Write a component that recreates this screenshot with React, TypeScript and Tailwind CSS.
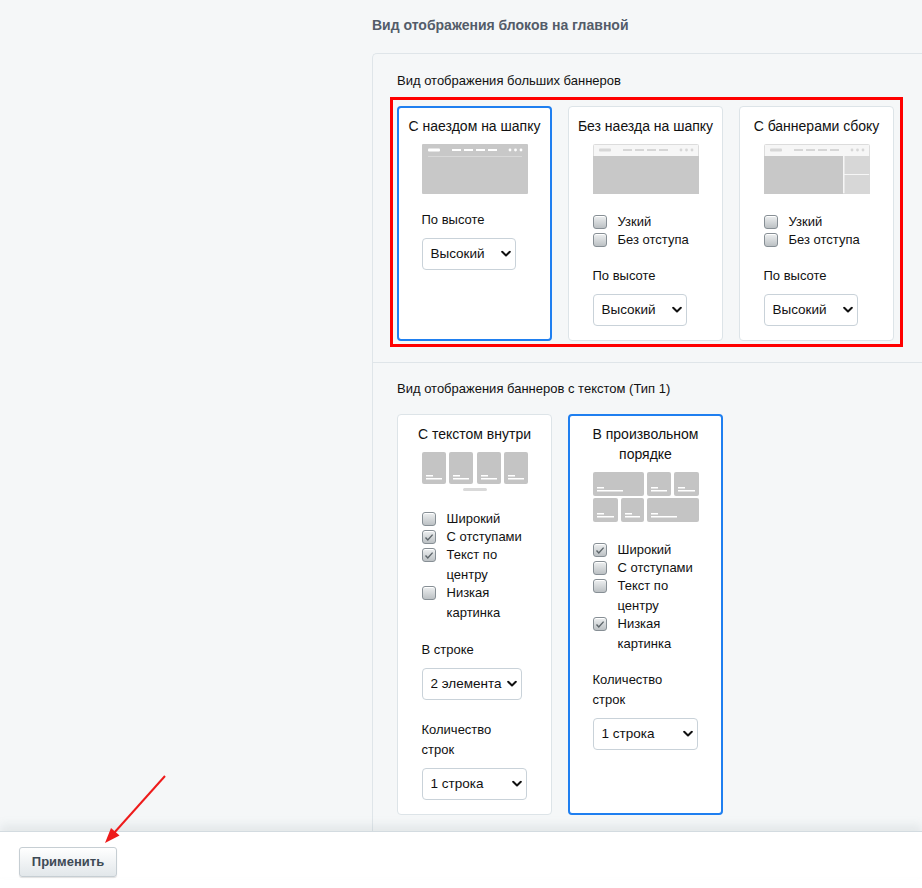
import { useState } from 'react';

type Opt = { label: string; checked: boolean };

function Chevron() {
  return (
    <svg width="10" height="7" viewBox="0 0 10 7" className="pointer-events-none absolute right-[5px] top-1/2 -translate-y-1/2">
      <path d="M1.2 1.2l3.8 3.8 3.8-3.8" fill="none" stroke="#111" strokeWidth="2" strokeLinecap="round" strokeLinejoin="round" />
    </svg>
  );
}

function Select({ value, options, width }: { value: string; options: string[]; width: string }) {
  const [v, setV] = useState(value);
  return (
    <div className={`relative mt-2 h-8 ${width}`}>
      <select
        value={v}
        onChange={e => setV(e.target.value)}
        className="h-8 w-full appearance-none rounded-[4px] border border-[#c9d2d9] bg-white pl-[8px] pr-[12px] text-[13.5px] text-[#111] outline-none"
      >
        {options.map(o => (
          <option key={o}>{o}</option>
        ))}
      </select>
      <Chevron />
    </div>
  );
}

function Check({ label, checked }: Opt) {
  const [on, setOn] = useState(checked);
  return (
    <label className="flex cursor-pointer items-start gap-[11px] text-[13px] leading-5 text-[#111] [&+label]:-mt-0.5">
      <span
        onClick={() => setOn(!on)}
        className="mt-[3px] flex h-[14px] w-[14px] shrink-0 items-center justify-center rounded-[3px] border border-[#878f95] bg-linear-to-b from-[#eef0f1] to-[#bcc1c4] shadow-[inset_0_1px_0_#fff]"
      >
        {on && (
          <svg width="10" height="9" viewBox="0 0 10 9">
            <path d="M1.5 4.5l2.3 2.4L8.6 1.6" fill="none" stroke="#5d656a" strokeWidth="1.4" />
          </svg>
        )}
      </span>
      <span>{label}</span>
    </label>
  );
}

function Checks({ items }: { items: Opt[] }) {
  return (
    <div className="mt-[18px] flex flex-col">
      {items.map(i => (
        <Check key={i.label} {...i} />
      ))}
    </div>
  );
}

function Field({ label, className = 'mt-4' }: { label: string; className?: string }) {
  return <div className={`${className} text-[13px] leading-5 text-[#111]`}>{label}</div>;
}

// header strip drawn on the banner previews
function HeadStrip({ light }: { light: boolean }) {
  const fg = light ? '#d6d6d6' : '#ffffff';
  return (
    <>
      <rect x="6" y="4.5" width="12" height="3" rx="1" fill={fg} />
      {[30, 42, 54, 66].map(x => (
        <rect key={x} x={x} y="5" width="9" height="2" fill={fg} />
      ))}
      {[88, 93.5, 99].map(x => (
        <circle key={x} cx={x} cy="6" r="1.4" fill={fg} />
      ))}
    </>
  );
}

function ThumbOverlay() {
  return (
    <svg width="106" height="50" viewBox="0 0 106 50">
      <rect width="106" height="50" rx="1" fill="#c8c8c8" />
      <HeadStrip light={false} />
      <rect x="6" y="12" width="94" height="1" fill="#d9d9d9" />
    </svg>
  );
}

function ThumbPlain({ side }: { side?: boolean }) {
  return (
    <svg width="106" height="50" viewBox="0 0 106 50">
      <rect x="0.5" y="0.5" width="105" height="49" rx="1" fill="#f6f6f6" stroke="#dcdcdc" />
      <HeadStrip light />
      {side ? (
        <>
          <rect x="0" y="12" width="79" height="38" fill="#c8c8c8" />
          <rect x="80.5" y="12" width="25.5" height="18" fill="#d7d7d7" />
          <rect x="80.5" y="31" width="25.5" height="19" fill="#d7d7d7" />
        </>
      ) : (
        <rect x="0" y="12" width="106" height="38" fill="#c8c8c8" />
      )}
    </svg>
  );
}

function Tile({ x, y, w, h }: { x: number; y: number; w: number; h: number }) {
  return (
    <g>
      <rect x={x} y={y} width={w} height={h} rx="2" fill="#c4c4c4" />
      <rect x={x + 4} y={y + h - 9} width="7" height="1.5" fill="#fff" />
      <rect x={x + 4} y={y + h - 6} width={Math.min(w - 8, 26)} height="1.5" fill="#fff" />
    </g>
  );
}

function ThumbRow() {
  return (
    <svg width="106" height="39" viewBox="0 0 106 39">
      {[0, 27, 55, 82].map(x => (
        <Tile key={x} x={x} y={0} w={24} h={32} />
      ))}
      <rect x="41" y="36" width="24" height="3" rx="1.5" fill="#d9d9d9" />
    </svg>
  );
}

function ThumbMosaic() {
  return (
    <svg width="106" height="50" viewBox="0 0 106 50">
      <Tile x={0} y={0} w={51} h={24} />
      <Tile x={54} y={0} w={24} h={24} />
      <Tile x={81} y={0} w={25} h={24} />
      <Tile x={0} y={26} w={25} h={24} />
      <Tile x={28} y={26} w={23} h={24} />
      <Tile x={54} y={26} w={52} h={24} />
    </svg>
  );
}

function Card({ active, title, children }: { active?: boolean; title: string; children: React.ReactNode }) {
  return (
    <div
      className={`w-[155px] rounded-[4px] bg-white pb-[14px] ${
        active ? 'border-2 border-[#1f7ff0] pt-2' : 'border border-[#dde4e8] pt-[9px]'
      }`}
    >
      <div className="px-1 text-center text-[14px] leading-5 text-[#111]">{title}</div>
      <div className="mx-auto mt-2 w-[106px]">{children}</div>
    </div>
  );
}

const noOffset: Opt[] = [
  { label: 'Узкий', checked: false },
  { label: 'Без отступа', checked: false },
];

export default function App() {
  return (
    <div className="relative h-[888px] w-[922px] overflow-hidden bg-white font-['Liberation_Sans',Arial,sans-serif]">
      <main className="h-[831px] overflow-hidden bg-[#f5f7f8] pl-[372px] pt-[15px]">
        <h2 className="text-[14px] font-bold leading-5 text-[#535c69]">Вид отображения блоков на главной</h2>

        <div className="mt-[18px] rounded-tl-[5px] border-l border-t border-[#dfe5e9]">
          {/* большие баннеры */}
          <section className="pb-[15px] pl-6 pt-[17px]">
            <div className="text-[13px] leading-5 text-[#111]">Вид отображения больших баннеров</div>
            <div className="-ml-[7px] mt-[6px] flex w-[513px] gap-4 border-[3px] border-[#ff0000] pb-[3px] pl-[4px] pr-[6px] pt-[6px]">
              <Card active title="С наездом на шапку">
                <ThumbOverlay />
                <Field label="По высоте" className="mt-4" />
                <Select value="Высокий" options={['Высокий', 'Низкий']} width="w-[94px]" />
              </Card>
              <Card title="Без наезда на шапку">
                <ThumbPlain />
                <Checks items={noOffset} />
                <Field label="По высоте" />
                <Select value="Высокий" options={['Высокий', 'Низкий']} width="w-[94px]" />
              </Card>
              <Card title="С баннерами сбоку">
                <ThumbPlain side />
                <Checks items={noOffset} />
                <Field label="По высоте" />
                <Select value="Высокий" options={['Высокий', 'Низкий']} width="w-[94px]" />
              </Card>
            </div>
          </section>

          {/* баннеры с текстом */}
          <section className="border-t border-[#dfe5e9] pb-10 pl-6 pt-4">
            <div className="text-[13px] leading-5 text-[#111]">Вид отображения баннеров с текстом (Тип 1)</div>
            <div className="mt-[15px] flex gap-4">
              <Card title="С текстом внутри">
                <ThumbRow />
                <Checks
                  items={[
                    { label: 'Широкий', checked: false },
                    { label: 'С отступами', checked: true },
                    { label: 'Текст по центру', checked: true },
                    { label: 'Низкая картинка', checked: false },
                  ]}
                />
                <Field label="В строке" className="mt-[17px]" />
                <Select value="2 элемента" options={['2 элемента', '3 элемента', '4 элемента']} width="w-[100px]" />
                <Field label="Количество строк" className="mt-5" />
                <Select value="1 строка" options={['1 строка', '2 строки']} width="w-[105px]" />
              </Card>
              <Card active title="В произвольном порядке">
                <ThumbMosaic />
                <Checks
                  items={[
                    { label: 'Широкий', checked: true },
                    { label: 'С отступами', checked: false },
                    { label: 'Текст по центру', checked: false },
                    { label: 'Низкая картинка', checked: true },
                  ]}
                />
                <Field label="Количество строк" className="mt-4" />
                <Select value="1 строка" options={['1 строка', '2 строки']} width="w-[105px]" />
              </Card>
            </div>
          </section>
        </div>
      </main>

      <footer className="relative border-t border-[#d3dbe0] bg-white pl-[19px] pt-[15px] shadow-[0_-6px_9px_rgba(120,140,150,0.14)]">
        <button className="h-[30px] w-[98px] rounded-[3px] border border-[#c6ced3] bg-linear-to-b from-white to-[#e2e7ea] text-[13px] font-bold text-[#3e4a55] shadow-[0_1px_1px_rgba(0,0,0,0.12)]">
          Применить
        </button>
      </footer>

      {/* стрелка к кнопке */}
      <svg className="pointer-events-none absolute left-0 top-0" width="922" height="888">
        <line x1="165" y1="776" x2="114" y2="833" stroke="#ee1b1b" strokeWidth="2" />
        <polygon points="105,843 119.5,835.5 111,828" fill="#ee1b1b" />
      </svg>
    </div>
  );
}
